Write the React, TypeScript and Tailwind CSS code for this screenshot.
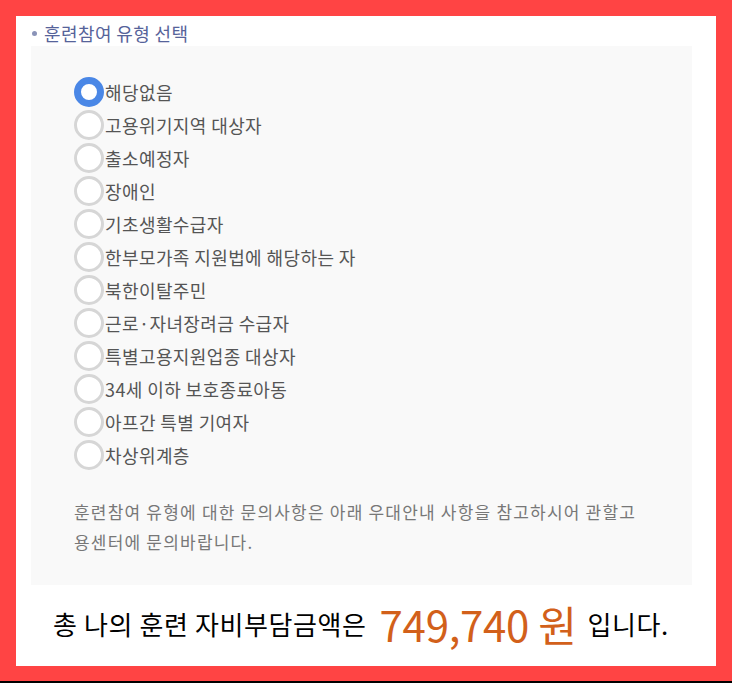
import React, { useState } from 'react';

const OPTIONS = [
  '해당없음',
  '고용위기지역 대상자',
  '출소예정자',
  '장애인',
  '기초생활수급자',
  '한부모가족 지원법에 해당하는 자',
  '북한이탈주민',
  '근로·자녀장려금 수급자',
  '특별고용지원업종 대상자',
  '34세 이하 보호종료아동',
  '아프간 특별 기여자',
  '차상위계층',
];

const FONT = { fontFamily: '"Noto Sans CJK KR", "Noto Sans", sans-serif' };

export default function App() {
  const [selected, setSelected] = useState(0);

  return (
    <div className="w-[732px] h-[683px] bg-[#ff4444] flex flex-col" style={FONT}>
      <div className="mt-4 mx-4 h-[650px] bg-white flex flex-col px-[15px] pt-[4px]">
        {/* Section title */}
        <div className="flex items-center h-[26px] text-[18px] text-[#56639a] tracking-[0.4px]">
          <span className="w-[5px] h-[5px] rounded-full bg-[#8a93b8] ml-[1px] mr-[7px]" />
          훈련참여 유형 선택
        </div>

        {/* Options box */}
        <div className="w-[661px] h-[539px] bg-[#f9f9f9] pl-[43px] pt-[31px]">
          <div className="flex flex-col gap-[3px]">
            {OPTIONS.map((label, idx) => (
              <label
                key={label}
                className="flex items-center h-[30px] cursor-pointer"
                onClick={() => setSelected(idx)}
              >
                <span
                  className={`w-[30px] h-[30px] rounded-full bg-white shrink-0 ${
                    selected === idx ? 'border-[7px] border-[#4a87e6]' : 'border-[3px] border-[#d6d6d6]'
                  }`}
                />
                <span className="ml-px text-[18px] text-[#555555] tracking-[0.4px] leading-none">{label}</span>
              </label>
            ))}
          </div>
          <p className="mt-[27px] text-[17px] leading-[30px] text-[#777777] tracking-[1.2px] w-[600px]">
            훈련참여 유형에 대한 문의사항은 아래 우대안내 사항을 참고하시어 관할고
            <br />
            용센터에 문의바랍니다.
          </p>
        </div>

        {/* Total */}
        <div className="flex-1 flex items-center justify-center pr-[10px] pb-[4px]">
          <span className="text-[26px] text-black tracking-[0.6px]">총 나의 훈련 자비부담금액은</span>
          <span className="ml-[13px] text-[42px] text-[#d2601a] tracking-[-0.3px] leading-none">749,740 원</span>
          <span className="ml-[11px] text-[26px] text-black tracking-[0.6px]">입니다.</span>
        </div>
      </div>
      <div className="flex-1" />
      <div className="h-[2px] bg-black" />
    </div>
  );
}
